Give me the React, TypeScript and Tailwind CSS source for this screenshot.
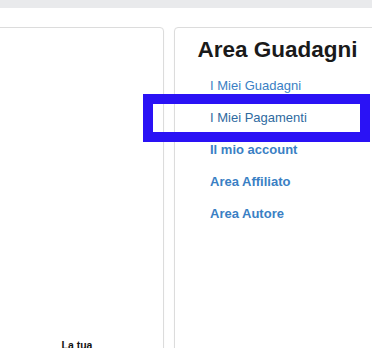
import React from 'react';

const links = [
    { label: 'I Miei Guadagni', bold: false, color: 'text-[#3a80c4]' },
    { label: 'I Miei Pagamenti', bold: false, color: 'text-[#2f6aa0]' },
    { label: 'Il mio account', bold: true, color: 'text-[#3a80c4]' },
    { label: 'Area Affiliato', bold: true, color: 'text-[#3a80c4]' },
    { label: 'Area Autore', bold: true, color: 'text-[#3a80c4]' },
];

export default function App() {
    return (
        <div className="relative h-[348px] w-[372px] overflow-hidden bg-white font-['Liberation_Sans',Arial,sans-serif]">
            {/* top strip */}
            <div className="h-[8px] bg-[#e9eaec]" />

            <div className="mt-[19px] flex gap-[10px] ml-[-10px]">
                {/* left card (mostly empty in view) */}
                <div className="h-[400px] w-[174px] shrink-0 rounded-[4px] border border-[#dcdcdc] bg-white shadow-[0_1px_2px_rgba(0,0,0,0.04)]">
                    <div className="pt-[310px] text-center text-[10.5px] font-bold leading-[14px] text-[#111]">
                        La tua
                    </div>
                </div>

                {/* right card */}
                <div className="h-[400px] w-[207px] shrink-0 rounded-[4px] border border-[#dcdcdc] bg-white shadow-[0_1px_2px_rgba(0,0,0,0.04)]">
                    <h2 className="pt-[9px] text-center text-[22.5px] font-bold leading-[26px] text-[#1a1a1a]">
                        Area Guadagni
                    </h2>
                    <ul className="mt-[7px] pl-[35px]">
                        {links.map((link) => (
                            <li key={link.label} className="h-[32px]">
                                <a
                                    href="#"
                                    className={`text-[13px] leading-[32px] ${link.color} ${link.bold ? 'font-bold' : 'font-normal'}`}
                                >
                                    {link.label}
                                </a>
                            </li>
                        ))}
                    </ul>
                </div>
            </div>

            {/* highlight box */}
            <div className="pointer-events-none absolute left-[143px] top-[94px] h-[48px] w-[227px] border-[10px] border-[#2a12f5]" />
        </div>
    );
}
